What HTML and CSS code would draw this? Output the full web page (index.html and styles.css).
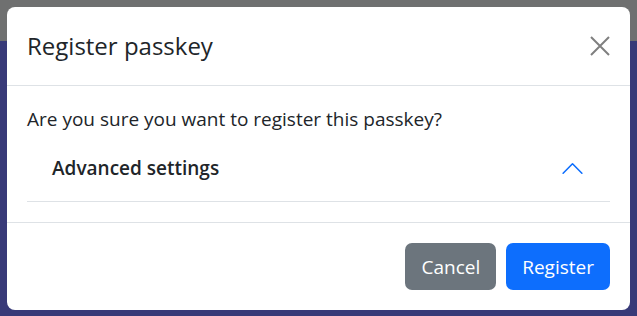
FILE: index.html
```html
<!DOCTYPE html>
<html lang="en">
<head>
    <meta charset="UTF-8">
    <meta name="viewport" content="width=device-width, initial-scale=1.0">
    <title>Register passkey</title>
    <link rel="stylesheet" href="styles.css">
</head>
<body>
<div class="modal">
    <div class="modal-header">
        <h5 class="modal-title">Register passkey</h5>
        <button class="btn-close" aria-label="Close">
            <svg width="20" height="20" viewBox="0 0 20 20">
                <path d="M1 1L19 19M19 1L1 19" stroke="#7f7f7f" stroke-width="2" fill="none"/>
            </svg>
        </button>
    </div>

    <div class="modal-body">
        <p>Are you sure you want to register this passkey?</p>
        <div class="accordion-item">
            <button class="accordion-button">
                <span>Advanced settings</span>
                <svg class="chevron" width="25" height="25" viewBox="0 0 16 16">
                    <path d="M2 11L8 5L14 11" fill="none" stroke="#0d6efd" stroke-linecap="round" stroke-linejoin="round"/>
                </svg>
            </button>
        </div>
    </div>

    <div class="modal-footer">
        <button class="btn btn-secondary">Cancel</button>
        <button class="btn btn-primary">Register</button>
    </div>
</div>
</body>
</html>
```

FILE: styles.css
```css
* {
    margin: 0;
    padding: 0;
    box-sizing: border-box;
    font-family: 'Segoe UI', 'Open Sans', 'Noto Sans', sans-serif;
}

body {
    min-height: 100vh;
    padding: 7px;
    color: #212529;
    background: linear-gradient(#6f7070 0, #6f7070 41px, #383a78 41px);
}

.modal {
    width: 623px;
    background: #fff;
    border-radius: 8px;
    overflow: hidden;
}

.modal-header {
    height: 79px;
    padding: 0 20px;
    display: flex;
    align-items: center;
    justify-content: space-between;
    border-bottom: 1px solid #dee2e6;
}

.modal-title {
    font-size: 24px;
    font-weight: 500;
    line-height: 30px;
}

.btn-close {
    display: flex;
    border: none;
    background: transparent;
    cursor: pointer;
}

.modal-body {
    padding: 18px 20px 20px;
    font-size: 19px;
}

.modal-body p {
    line-height: 30px;
}

.accordion-item {
    border-bottom: 1px solid #dee2e6;
}

.accordion-button {
    width: 100%;
    padding: 19px 25px 18px;
    display: flex;
    align-items: center;
    justify-content: space-between;
    border: none;
    background: transparent;
    color: #212529;
    font-size: 19px;
    font-weight: 600;
    line-height: 30px;
    text-align: left;
    cursor: pointer;
}

.modal-footer {
    padding: 20px;
    display: flex;
    justify-content: flex-end;
    gap: 10px;
    border-top: 1px solid #dee2e6;
}

.btn {
    padding: 7.5px 15px;
    border: 1px solid transparent;
    border-radius: 7px;
    color: #fff;
    font-size: 19px;
    line-height: 30px;
    cursor: pointer;
}

.btn-secondary {
    background: #6c757d;
}

.btn-primary {
    background: #0d6efd;
}
```
